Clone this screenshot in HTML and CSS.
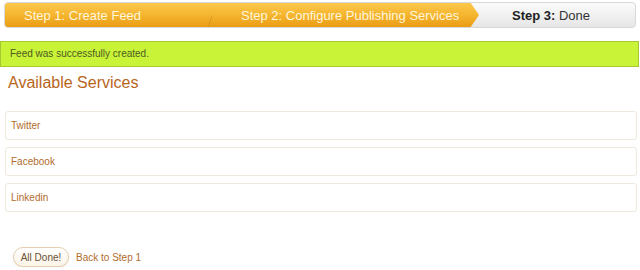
FILE: index.html
```html
<!DOCTYPE html>
<html>
<head>
<meta charset="utf-8">
<link rel="stylesheet" href="styles.css">
</head>
<body>
<div class="steps">
  <div class="step step1">Step 1: Create Feed<span class="sep"></span></div>
  <div class="step step2">Step 2: Configure Publishing Services</div>
  <div class="step step3"><b>Step 3:</b> Done</div>
</div>
<div class="notice">Feed was successfully created.</div>
<h2 class="title">Available Services</h2>
<div class="services">
  <div class="service">Twitter</div>
  <div class="service">Facebook</div>
  <div class="service">Linkedin</div>
</div>
<div class="actions">
  <button class="done">All Done!</button>
  <a class="back" href="#">Back to Step 1</a>
</div>
</body>
</html>
```
FILE: styles.css
```css
html, body {
  margin: 0;
  padding: 0;
  background: #fff;
  font-family: "Liberation Sans", Arial, sans-serif;
}
.steps {
  margin: 2px 4px 0 4px;
  height: 26px;
  display: flex;
  border-radius: 4px;
  background: linear-gradient(#fbfbfb, #e6e6e6);
  border: 1px solid #d8d8d8;
  box-sizing: border-box;
  position: relative;
  overflow: hidden;
}
.step {
  font-size: 13px;
  line-height: 27px;
  height: 26px;
  margin-top: -1px;
  white-space: nowrap;
}
.step1, .step2 {
  color: #fff6dc;
  background: linear-gradient(#fcc94f 0%, #f5b52f 50%, #e99a12 100%);
}
.step1 {
  width: 208px;
  padding-left: 20px;
  margin-left: -1px;
  box-sizing: border-box;
  position: relative;
}
.sep {
  position: absolute;
  right: -4px;
  top: 0;
  width: 8px;
  height: 26px;
  background: linear-gradient(to bottom right, transparent 46%, rgba(160,100,10,0.3) 50%, transparent 56%);
}
.step2 {
  width: 267px;
  padding-left: 29px;
  box-sizing: border-box;
  clip-path: polygon(0 0, 258px 0, 267px 50%, 258px 100%, 0 100%);
}
.step3 {
  color: #333;
  padding-left: 33px;
}
.step3 b {
  color: #222;
}
.notice {
  margin-top: 13px;
  height: 26px;
  box-sizing: border-box;
  width: 639px;
  background: #c9f337;
  border: 1px solid #a7c832;
  font-size: 10px;
  line-height: 24px;
  padding-left: 9px;
  color: #4d5a22;
}
.title {
  margin: 6px 0 0 8px;
  font-weight: normal;
  font-size: 16px;
  line-height: 20px;
  color: #b8651c;
}
.services {
  margin: 18px 3px 0 5px;
  display: flex;
  flex-direction: column;
  gap: 7px;
}
.service {
  height: 29px;
  box-sizing: border-box;
  border: 1px solid #efe9dc;
  border-radius: 3px;
  font-size: 10px;
  line-height: 27px;
  padding-left: 5px;
  color: #b26c2c;
}
.actions {
  margin: 35px 0 0 13px;
  display: flex;
  align-items: center;
  gap: 7px;
}
.done {
  height: 20px;
  width: 56px;
  padding: 0;
  border: 1px solid #e3cfae;
  border-radius: 10px;
  background: linear-gradient(#ffffff, #fbf4e8);
  font-family: "Liberation Sans", Arial, sans-serif;
  font-size: 10px;
  color: #6b5234;
  box-shadow: 0 1px 1px rgba(200,170,120,0.3);
}
.back {
  font-size: 10px;
  color: #b26c2c;
  text-decoration: none;
}
```
